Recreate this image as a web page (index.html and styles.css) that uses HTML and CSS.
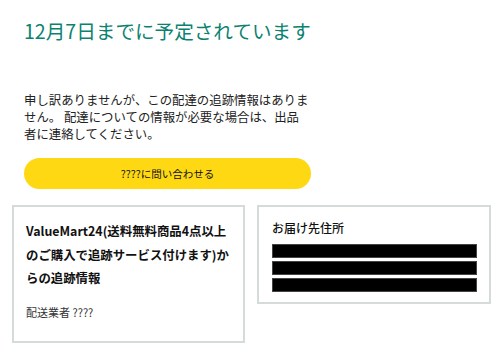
FILE: index.html
```html
<!DOCTYPE html>
<html lang="ja">
<head>
<meta charset="utf-8">
<link rel="stylesheet" href="styles.css">
</head>
<body>
<div class="page">
  <section class="top">
    <h1 class="status">12月7日までに予定されています</h1>
    <p class="note">申し訳ありませんが、この配達の追跡情報はありません。 配達についての情報が必要な場合は、出品者に連絡してください。</p>
    <button class="contact">????に問い合わせる</button>
  </section>
  <section class="cards">
    <div class="card card-left">
      <h2 class="card-title">ValueMart24(送料無料商品4点以上のご購入で追跡サービス付けます)からの追跡情報</h2>
      <p class="carrier">配送業者 ????</p>
    </div>
    <div class="card card-right">
      <h2 class="addr-title">お届け先住所</h2>
      <div class="bars">
        <div class="bar"></div>
        <div class="bar"></div>
        <div class="bar"></div>
      </div>
    </div>
  </section>
</div>
</body>
</html>
```

FILE: styles.css
```css
* { box-sizing: border-box; }
html, body {
  margin: 0;
  padding: 0;
  background: #fff;
}
body {
  font-family: "Noto Sans CJK JP", "Noto Sans", sans-serif;
  color: #0f1111;
}
.page {
  width: 500px;
}
.top {
  padding: 17px 0 0 24px;
  width: 311px;
}
.status {
  margin: 0;
  font-size: 19.6px;
  font-weight: 400;
  line-height: 28px;
  color: #0b8270;
  white-space: nowrap;
}
.note {
  margin: 47px 0 0;
  font-size: 12.4px;
  line-height: 16.8px;
  color: #222;
}
.contact {
  display: block;
  width: 287px;
  height: 31px;
  margin-top: 16px;
  border: none;
  border-radius: 16px;
  background: #ffd814;
  font-family: inherit;
  font-size: 10.5px;
  color: #0f1111;
  padding: 0;
}
.cards {
  display: grid;
  grid-template-columns: 233px 234px;
  column-gap: 12px;
  padding: 16px 0 0 12px;
  align-items: start;
}
.card {
  border: 2px solid #d5dbdb;
}
.card-left {
  padding: 13px 12px 21px 12px;
}
.card-title {
  margin: 0;
  font-size: 12.4px;
  font-weight: 700;
  line-height: 23.3px;
  color: #111;
}
.carrier {
  margin: 14px 0 0;
  font-size: 11px;
  line-height: 16px;
  color: #333;
}
.card-right {
  padding: 11px 12px 10px 13px;
}
.addr-title {
  margin: 0;
  font-size: 12px;
  font-weight: 500;
  line-height: 20px;
  color: #0f1111;
}
.bars {
  margin-top: 6px;
  display: flex;
  flex-direction: column;
  gap: 3px;
}
.bar {
  height: 14px;
  background: #000;
  border: 1px solid #444;
}
```
